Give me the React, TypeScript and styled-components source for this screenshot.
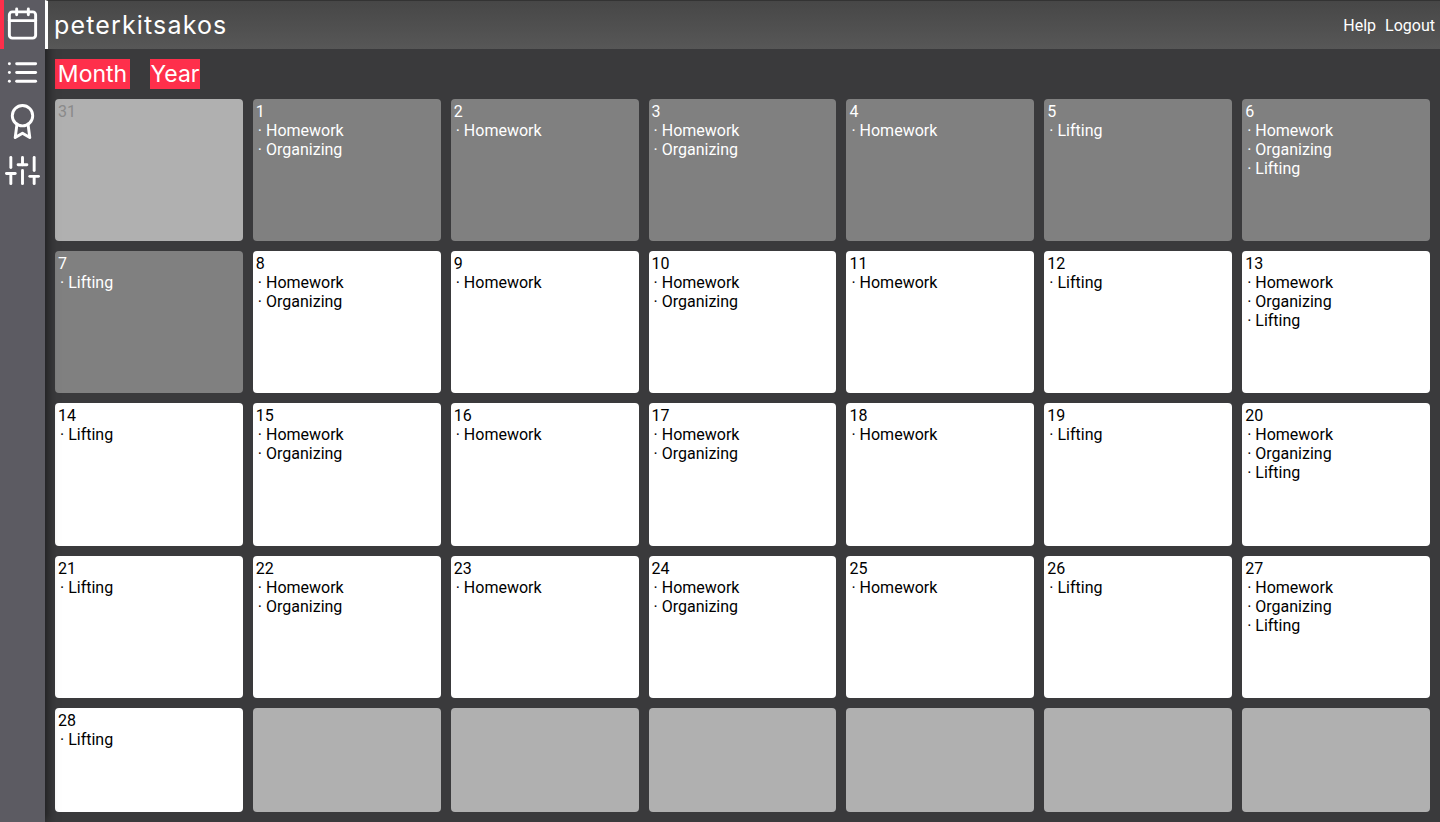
import React from 'react'
import styled, { createGlobalStyle } from 'styled-components'
import { FiAward, FiCalendar, FiList, FiSliders } from 'react-icons/fi'

const GlobalStyle = createGlobalStyle`
  html, body {
    margin: 0;
    padding: 0;
    height: 100%;
    background: #3a3a3c;
    font-family: Roboto, "Liberation Sans", sans-serif;
    overflow: hidden;
  }
  * {
    box-sizing: border-box;
  }
`

const Page = styled.div`
  display: flex;
  width: 1440px;
  height: 822px;
`

const Sidebar = styled.nav`
  flex: 0 0 45px;
  display: flex;
  flex-direction: column;
  background: #5c5b62;
  box-shadow: 2px 0 10px rgba(0, 0, 0, 0.55);
  z-index: 1;
`

const SideItem = styled.div<{ $active?: boolean }>`
  height: 49px;
  display: flex;
  align-items: center;
  justify-content: center;
  color: #fff;
  padding-bottom: 2px;
  border-left: ${({ $active }) => ($active ? '4px solid #fe2f4b' : 'none')};
  padding-right: ${({ $active }) => ($active ? '4px' : '0')};
`

const Main = styled.div`
  flex: 1;
  display: flex;
  flex-direction: column;
  min-width: 0;
`

const Header = styled.header`
  position: relative;
  z-index: 2;
  height: 49px;
  display: flex;
  align-items: center;
  justify-content: space-between;
  border-top: 1px solid #333;
  border-left: 3px solid #fff;
  padding: 0 5px 0 6px;
  background: linear-gradient(#474747, #575757);
`

const Title = styled.div`
  font-family: Inter, sans-serif;
  font-size: 25px;
  color: #fff;
  letter-spacing: 1.15px;
`

const HeaderLinks = styled.div`
  display: flex;
  gap: 9px;
  font-size: 16px;
  color: #fff;
`

const Tabs = styled.div`
  display: flex;
  gap: 20px;
  padding: 10px;
`

const Tab = styled.div<{ $width: number }>`
  width: ${({ $width }) => $width}px;
  height: 30px;
  background: #fe2f4b;
  color: #fff;
  font-family: Inter, sans-serif;
  font-size: 23px;
  line-height: 30px;
  text-align: center;
`

const Grid = styled.div`
  display: grid;
  grid-template-columns: repeat(7, 1fr);
  grid-template-rows: repeat(4, 142.2px) 104.2px;
  gap: 10px;
  padding: 0 10px;
`

type Tone = 'today' | 'past' | 'muted' | 'empty'

const toneStyles: Record<Tone, string> = {
  today: 'background: #fff; color: #000;',
  past: 'background: #808080; color: #fff;',
  muted: 'background: #b0b0b0; color: #8a8a8a;',
  empty: 'background: #b0b0b0; color: #000;',
}

const Cell = styled.div<{ $tone: Tone }>`
  border-radius: 4px;
  padding: 3px;
  font-size: 16px;
  line-height: 19px;
  ${({ $tone }) => toneStyles[$tone]}
`

const Task = styled.div`
  padding-left: 2px;
  white-space: pre;
`

const plan: string[][] = [
  ['Homework', 'Organizing'],
  ['Homework'],
  ['Homework', 'Organizing'],
  ['Homework'],
  ['Lifting'],
  ['Homework', 'Organizing', 'Lifting'],
  ['Lifting'],
]

const days: { label: string; tone: Tone; tasks: string[] }[] = [
  { label: '31', tone: 'muted', tasks: [] },
]

for (let d = 1; d <= 28; d++) {
  days.push({ label: String(d), tone: d <= 7 ? 'past' : 'today', tasks: plan[(d - 1) % 7] })
}

for (let i = 0; i < 6; i++) {
  days.push({ label: '', tone: 'empty', tasks: [] })
}

export default function App() {
  return (
    <Page>
      <GlobalStyle />
      <Sidebar>
        <SideItem $active>
          <FiCalendar size={35} />
        </SideItem>
        <SideItem>
          <FiList size={35} />
        </SideItem>
        <SideItem>
          <FiAward size={35} />
        </SideItem>
        <SideItem>
          <FiSliders size={35} />
        </SideItem>
      </Sidebar>
      <Main>
        <Header>
          <Title>peterkitsakos</Title>
          <HeaderLinks>
            <span>Help</span>
            <span>Logout</span>
          </HeaderLinks>
        </Header>
        <Tabs>
          <Tab $width={75}>Month</Tab>
          <Tab $width={50}>Year</Tab>
        </Tabs>
        <Grid>
          {days.map((day, i) => (
            <Cell key={i} $tone={day.tone}>
              {day.label && <div>{day.label}</div>}
              {day.tasks.map((task) => (
                <Task key={task}>{'· ' + task}</Task>
              ))}
            </Cell>
          ))}
        </Grid>
      </Main>
    </Page>
  )
}
